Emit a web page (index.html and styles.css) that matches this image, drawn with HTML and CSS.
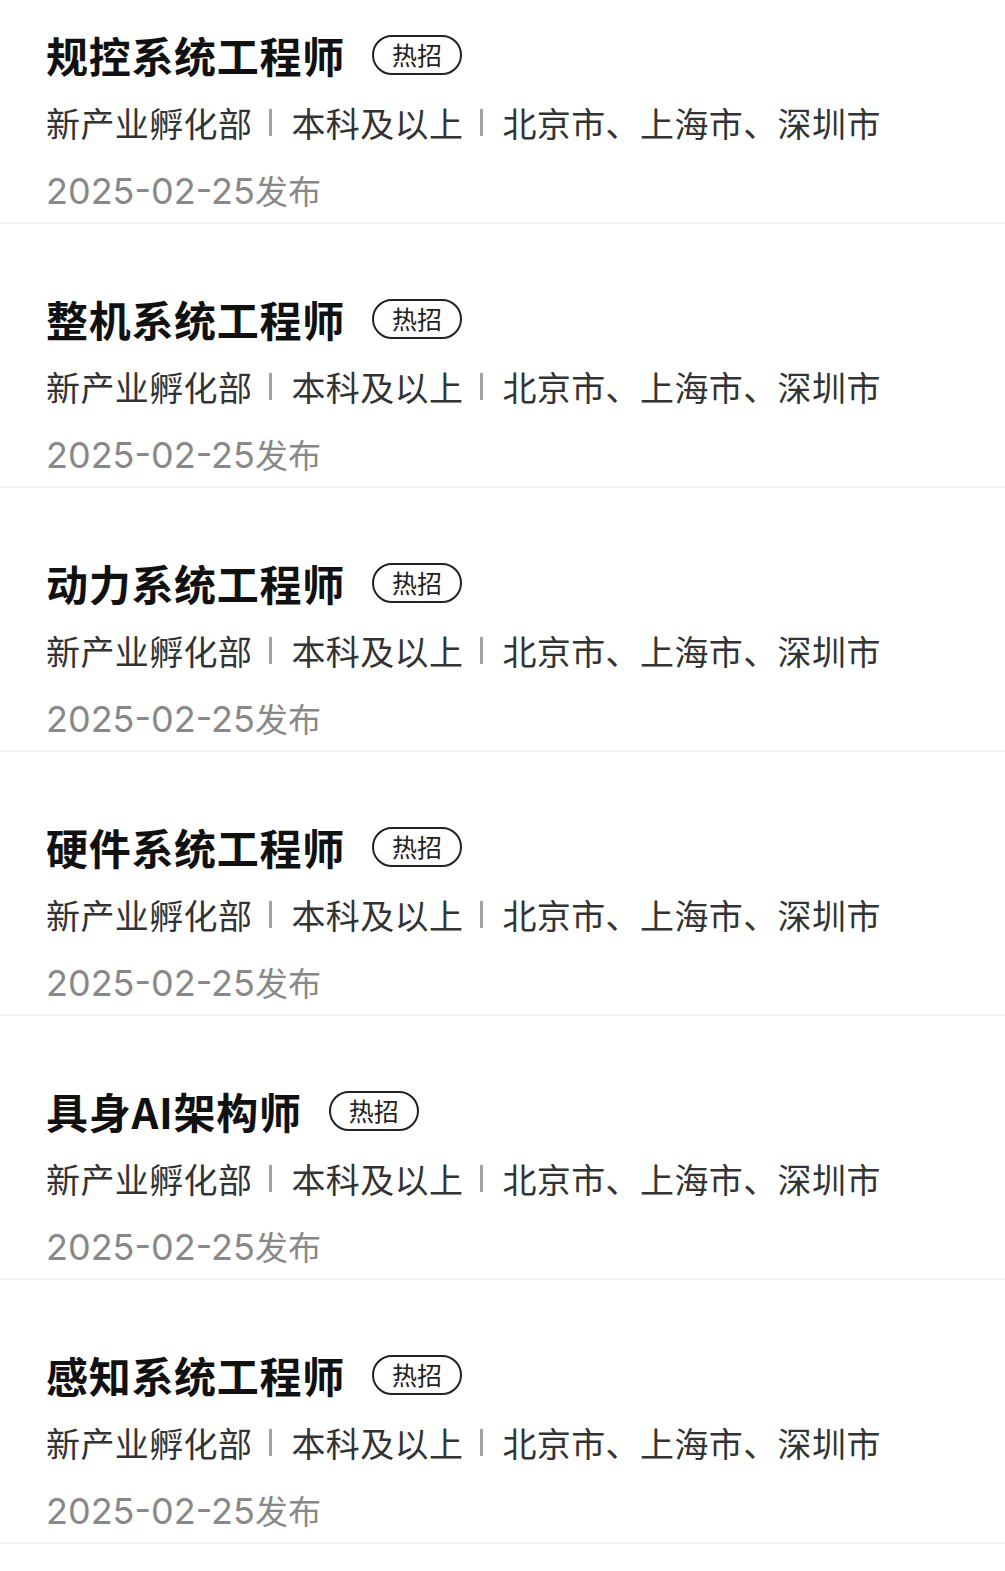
FILE: index.html
```html
<!DOCTYPE html>
<html lang="zh-CN">

<head>
    <meta charset="UTF-8">
    <meta name="viewport" content="width=device-width, initial-scale=1.0">
    <title>职位列表</title>
    <link rel="stylesheet" href="styles.css">
</head>

<body>
    <div class="job-list">
        <div class="job">
            <div class="job-title"><span class="name">规控系统工程师</span><span class="hot">热招</span></div>
            <div class="job-meta"><span>新产业孵化部</span><i class="sep"></i><span>本科及以上</span><i class="sep"></i><span>北京市、上海市、深圳市</span></div>
            <div class="job-date"><span class="num">2025-02-25</span>发布</div>
        </div>
        <div class="job">
            <div class="job-title"><span class="name">整机系统工程师</span><span class="hot">热招</span></div>
            <div class="job-meta"><span>新产业孵化部</span><i class="sep"></i><span>本科及以上</span><i class="sep"></i><span>北京市、上海市、深圳市</span></div>
            <div class="job-date"><span class="num">2025-02-25</span>发布</div>
        </div>
        <div class="job">
            <div class="job-title"><span class="name">动力系统工程师</span><span class="hot">热招</span></div>
            <div class="job-meta"><span>新产业孵化部</span><i class="sep"></i><span>本科及以上</span><i class="sep"></i><span>北京市、上海市、深圳市</span></div>
            <div class="job-date"><span class="num">2025-02-25</span>发布</div>
        </div>
        <div class="job">
            <div class="job-title"><span class="name">硬件系统工程师</span><span class="hot">热招</span></div>
            <div class="job-meta"><span>新产业孵化部</span><i class="sep"></i><span>本科及以上</span><i class="sep"></i><span>北京市、上海市、深圳市</span></div>
            <div class="job-date"><span class="num">2025-02-25</span>发布</div>
        </div>
        <div class="job">
            <div class="job-title"><span class="name">具身AI架构师</span><span class="hot">热招</span></div>
            <div class="job-meta"><span>新产业孵化部</span><i class="sep"></i><span>本科及以上</span><i class="sep"></i><span>北京市、上海市、深圳市</span></div>
            <div class="job-date"><span class="num">2025-02-25</span>发布</div>
        </div>
        <div class="job">
            <div class="job-title"><span class="name">感知系统工程师</span><span class="hot">热招</span></div>
            <div class="job-meta"><span>新产业孵化部</span><i class="sep"></i><span>本科及以上</span><i class="sep"></i><span>北京市、上海市、深圳市</span></div>
            <div class="job-date"><span class="num">2025-02-25</span>发布</div>
        </div>
    </div>
</body>

</html>
```

FILE: styles.css
```css
body {
    margin: 0;
    background-color: #fff;
    font-family: "Noto Sans CJK SC", "Noto Sans", sans-serif;
    color: #111;
}

.job {
    padding: 67px 46px 4px;
    border-bottom: 2px solid #f3f3f3;
}

.job:first-child {
    padding-top: 27px;
}

.job-title {
    display: flex;
    align-items: center;
    gap: 27px;
    height: 56px;
}

.job-title .name {
    font-size: 42px;
    font-weight: 700;
    line-height: 56px;
    letter-spacing: 0.7px;
}

.hot {
    box-sizing: border-box;
    height: 40px;
    padding: 0 18px;
    border: 2px solid #222;
    border-radius: 20px;
    font-size: 25px;
    line-height: 35px;
    color: #222;
}

.job-meta {
    display: flex;
    align-items: center;
    margin-top: 11px;
    height: 56px;
    font-size: 34px;
    letter-spacing: 0.4px;
    color: #333;
}

.job-meta .sep {
    width: 3px;
    height: 27px;
    margin: 0 19px 0 17px;
    background-color: #a3a3a3;
}

.job-date {
    margin-top: 12px;
    height: 56px;
    font-size: 33px;
    line-height: 56px;
    color: #888;
}

.job-date .num {
    font-family: Inter, "Noto Sans", sans-serif;
    font-size: 36px;
}
```
